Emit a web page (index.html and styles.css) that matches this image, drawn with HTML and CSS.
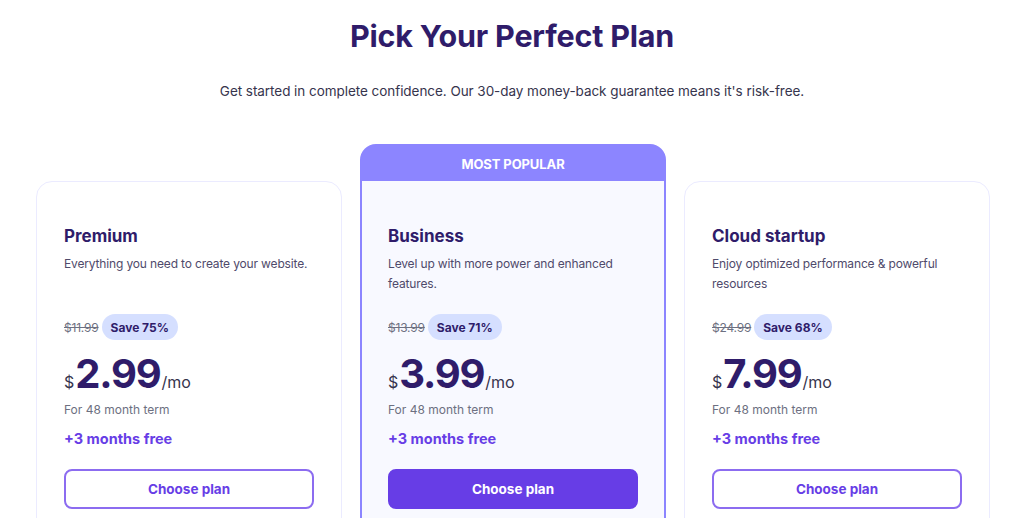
FILE: index.html
```html
<!DOCTYPE html>
<html lang="en">
<head>
<meta charset="utf-8">
<title>Pick Your Perfect Plan</title>
<link rel="stylesheet" href="styles.css">
</head>
<body>
<section class="pricing">
  <h1 class="title">Pick Your Perfect Plan</h1>
  <p class="subtitle">Get started in complete confidence. Our 30-day money-back guarantee means it's risk-free.</p>
  <div class="plans">
    <div class="plan">
      <div class="card">
        <h3 class="plan-name">Premium</h3>
        <p class="plan-desc">Everything you need to create your website.</p>
        <div class="discount"><span class="old">$11.99</span><span class="save">Save 75%</span></div>
        <div class="price"><span class="cur">$</span><span class="amount">2.99</span><span class="per">/mo</span></div>
        <div class="term">For 48 month term</div>
        <div class="bonus">+3 months free</div>
        <button class="btn btn-outline">Choose plan</button>
      </div>
    </div>
    <div class="plan plan-featured">
      <div class="ribbon">MOST POPULAR</div>
      <div class="card card-featured">
        <h3 class="plan-name">Business</h3>
        <p class="plan-desc">Level up with more power and enhanced features.</p>
        <div class="discount"><span class="old">$13.99</span><span class="save">Save 71%</span></div>
        <div class="price"><span class="cur">$</span><span class="amount">3.99</span><span class="per">/mo</span></div>
        <div class="term">For 48 month term</div>
        <div class="bonus">+3 months free</div>
        <button class="btn btn-filled">Choose plan</button>
      </div>
    </div>
    <div class="plan">
      <div class="card">
        <h3 class="plan-name">Cloud startup</h3>
        <p class="plan-desc">Enjoy optimized performance &amp; powerful resources</p>
        <div class="discount"><span class="old">$24.99</span><span class="save">Save 68%</span></div>
        <div class="price"><span class="cur">$</span><span class="amount">7.99</span><span class="per">/mo</span></div>
        <div class="term">For 48 month term</div>
        <div class="bonus">+3 months free</div>
        <button class="btn btn-outline">Choose plan</button>
      </div>
    </div>
  </div>
</section>
</body>
</html>
```
FILE: styles.css
```css
* { box-sizing: border-box; }
html, body { margin: 0; padding: 0; }
body {
  background: #ffffff;
  font-family: Inter, "Noto Sans", "Liberation Sans", sans-serif;
  color: #36344d;
  overflow: hidden;
  height: 518px;
}
.pricing {
  display: flex;
  flex-direction: column;
  align-items: center;
}
.title {
  margin: 16px 0 0;
  font-size: 30.5px;
  line-height: 40px;
  font-weight: 700;
  color: #2f1c6a;
  letter-spacing: -0.2px;
}
.subtitle {
  margin: 25px 0 0;
  font-size: 13.5px;
  line-height: 20px;
  color: #36344d;
  letter-spacing: -0.05px;
}
.plans {
  margin-top: 43px;
  margin-left: 2px;
  display: flex;
  gap: 18px;
  align-items: flex-start;
}
.plan {
  width: 306px;
  margin-top: 37px;
}
.plan-featured {
  margin-top: 0;
  border: 2px solid #8c85ff;
  border-radius: 16px;
  overflow: hidden;
  background: #8c85ff;
}
.ribbon {
  height: 35px;
  display: flex;
  align-items: center;
  justify-content: center;
  color: #ffffff;
  font-weight: 700;
  font-size: 13px;
  letter-spacing: -0.1px;
}
.card {
  border: 1.5px solid #ebebff;
  border-radius: 16px;
  background: #ffffff;
  padding: 42px 28px 40px 27px;
  min-height: 360px;
}
.card-featured {
  border: none;
  border-radius: 0;
  background: #f8f9ff;
  padding: 43px 27px 40px 26px;
}
.plan-name {
  margin: 0;
  font-size: 17px;
  line-height: 24px;
  font-weight: 700;
  color: #2f1c6a;
}
.plan-desc {
  margin: 6px 0 0;
  font-size: 12px;
  line-height: 20px;
  min-height: 40px;
  color: #4f4a6b;
  letter-spacing: -0.15px;
}
.discount {
  margin-top: 20px;
  display: flex;
  align-items: center;
  gap: 3px;
  height: 26px;
}
.old {
  font-size: 12px;
  color: #6d7081;
  text-decoration: line-through;
  letter-spacing: -0.2px;
}
.save {
  background: #d5dfff;
  color: #2f1c6a;
  font-weight: 700;
  font-size: 12px;
  border-radius: 13px;
  height: 26px;
  padding: 0 9px;
  display: flex;
  align-items: center;
}
.price {
  margin-top: 12px;
  display: flex;
  align-items: baseline;
  color: #2f1c6a;
  height: 44px;
}
.cur {
  font-size: 16px;
  color: #36344d;
  margin-right: 1px;
}
.amount {
  font-size: 40px;
  line-height: 44px;
  font-weight: 700;
  letter-spacing: -1.2px;
}
.per {
  font-size: 16px;
  color: #36344d;
  margin-left: 1px;
}
.term {
  margin-top: 5px;
  font-size: 12px;
  line-height: 18px;
  color: #6d7081;
}
.bonus {
  margin-top: 9px;
  font-size: 14.5px;
  line-height: 22px;
  font-weight: 700;
  color: #673de6;
}
.btn {
  margin-top: 19px;
  display: flex;
  align-items: center;
  justify-content: center;
  width: 250px;
  height: 40px;
  border-radius: 8px;
  font-family: inherit;
  font-size: 13.5px;
  font-weight: 700;
  cursor: pointer;
}
.btn-outline {
  background: #ffffff;
  border: 2px solid #8c6cf0;
  color: #673de6;
}
.btn-filled {
  background: #673de6;
  border: 2px solid #673de6;
  color: #ffffff;
}
```
